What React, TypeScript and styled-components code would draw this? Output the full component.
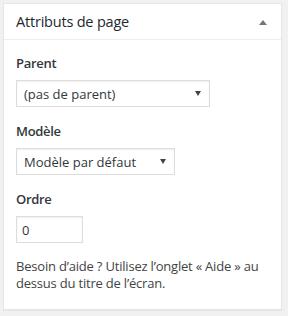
import React from 'react';
import styled, { createGlobalStyle } from 'styled-components';

const GlobalStyle = createGlobalStyle`
  html, body {
    margin: 0;
    padding: 0;
    background: #f1f1f1;
  }
  body {
    font-family: "Open Sans", "Noto Sans", sans-serif;
    color: #444;
  }
`;

const Page = styled.div`
  padding: 3px 0 0 3px;
  width: 288px;
  height: 316px;
  box-sizing: border-box;
`;

const Box = styled.div`
  width: 279px;
  box-sizing: border-box;
  background: #fff;
  border: 1px solid #e5e5e5;
  box-shadow: 0 1px 1px rgba(0, 0, 0, 0.04);
`;

const Header = styled.div`
  display: flex;
  align-items: center;
  justify-content: space-between;
  height: 35px;
  padding: 0 12px;
  border-bottom: 1px solid #eee;
`;

const Title = styled.h2`
  margin: 0;
  font-size: 14.5px;
  letter-spacing: -0.2px;
  font-weight: 400;
  color: #23282d;
`;

const Toggle = styled.span`
  width: 0;
  height: 0;
  margin: 1px 2px 0 0;
  border-left: 4px solid transparent;
  border-right: 4px solid transparent;
  border-bottom: 5px solid #72777c;
`;

const Inside = styled.div`
  padding: 14px 12px 17px;
`;

const Label = styled.p`
  margin: 0 0 7px;
  font-size: 13px;
  line-height: 19px;
  letter-spacing: -0.3px;
  font-weight: 600;
  color: #32373c;
`;

const Field = styled.div`
  margin-bottom: 15px;
`;

const Select = styled.div<{ $width: number }>`
  display: flex;
  align-items: center;
  justify-content: space-between;
  width: ${(p) => p.$width}px;
  height: 27px;
  box-sizing: border-box;
  padding: 0 8px 0 7px;
  border: 1px solid #ddd;
  box-shadow: inset 0 1px 2px rgba(0, 0, 0, 0.07);
  font-size: 13px;
  color: #32373c;
`;

const Caret = styled.span`
  width: 0;
  height: 0;
  border-left: 3px solid transparent;
  border-right: 3px solid transparent;
  border-top: 5px solid #444;
`;

const NumberInput = styled.input`
  display: block;
  width: 67px;
  height: 27px;
  box-sizing: border-box;
  margin: 0;
  padding: 0 5px;
  border: 1px solid #ddd;
  box-shadow: inset 0 1px 2px rgba(0, 0, 0, 0.07);
  font-family: inherit;
  font-size: 13px;
  color: #32373c;
  outline: none;
`;

const Help = styled.p`
  margin: 0;
  font-size: 13px;
  line-height: 17px;
  letter-spacing: -0.2px;
  color: #444;
`;

export default function App() {
  return (
    <Page>
      <GlobalStyle />
      <Box>
        <Header>
          <Title>Attributs de page</Title>
          <Toggle />
        </Header>
        <Inside>
          <Field>
            <Label>Parent</Label>
            <Select $width={194}>
              <span>(pas de parent)</span>
              <Caret />
            </Select>
          </Field>
          <Field>
            <Label>Modèle</Label>
            <Select $width={159}>
              <span>Modèle par défaut</span>
              <Caret />
            </Select>
          </Field>
          <Field>
            <Label>Ordre</Label>
            <NumberInput type="text" defaultValue="0" />
          </Field>
          <Help>Besoin d’aide ? Utilisez l’onglet « Aide » au dessus du titre de l’écran.</Help>
        </Inside>
      </Box>
    </Page>
  );
}
